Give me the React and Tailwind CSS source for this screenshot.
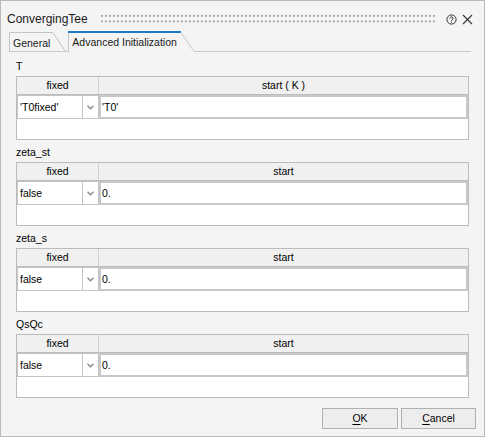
import React from "react";

const sections = [
  { label: "T", fixed: "'T0fixed'", startHeader: "start ( K )", start: "'T0'" },
  { label: "zeta_st", fixed: "false", startHeader: "start", start: "0." },
  { label: "zeta_s", fixed: "false", startHeader: "start", start: "0." },
  { label: "QsQc", fixed: "false", startHeader: "start", start: "0." },
];

function Section({ s, first }) {
  return (
    <div className={first ? "" : "mt-[4px]"}>
      <div className="h-[16px] leading-[16px] text-[10.5px] pl-[0px]">{s.label}</div>
      <div className="mt-[2px] h-[64px] border border-[#bcbcbc] bg-white flex flex-col">
        <div className="h-[18px] flex bg-[#f0f0f0] border-b border-[#bcbcbc] text-[10.5px] leading-[17px]">
          <div className="w-[82px] border-r border-[#d2d2d2] text-center">fixed</div>
          <div className="flex-1 text-center">{s.startHeader}</div>
        </div>
        <div className="h-[24px] flex text-[10.5px]">
          <div className="w-[82px] flex border border-[#c4c4c4]">
            <div className="flex-1 border-r border-[#c4c4c4] pl-[2px] leading-[22px]">{s.fixed}</div>
            <div className="w-[15px] flex items-center justify-center">
              <svg width="7" height="5" viewBox="0 0 7 5">
                <path d="M0.5 0.8 L3.5 3.8 L6.5 0.8" fill="none" stroke="#8a8a8a" strokeWidth="1.4" />
              </svg>
            </div>
          </div>
          <div className="flex-1 border-2 border-[#c8c8c8] pl-[1px] leading-[20px]">{s.start}</div>
        </div>
        <div className="flex-1 bg-white" />
      </div>
    </div>
  );
}

export default function App() {
  return (
    <div className="w-[485px] h-[437px] bg-[#f4f4f4] border border-[#bababa] flex flex-col text-black font-['Liberation_Sans',Arial,sans-serif]">
      {/* title bar */}
      <div className="h-[30px] pt-[6px] pl-[6px] flex items-center shrink-0">
        <span className="text-[12px] leading-none text-[#1a1a1a]">ConvergingTee</span>
        <svg className="ml-[13px]" width="334" height="8" viewBox="0 0 334 8">
          <defs>
            <pattern id="dots" x="0" y="0" width="4" height="5.5" patternUnits="userSpaceOnUse">
              <rect x="0" y="0" width="1.7" height="1.7" fill="#959595" />
            </pattern>
          </defs>
          <rect x="0" y="0" width="334" height="8" fill="url(#dots)" />
        </svg>
        <svg className="ml-[11px]" width="11" height="11" viewBox="0 0 11 11">
          <circle cx="5.5" cy="5.5" r="4.6" fill="none" stroke="#333" strokeWidth="1" />
          <path d="M4 4.4 A1.5 1.5 0 1 1 6.1 5.8 C5.6 6.1 5.5 6.4 5.5 6.9" fill="none" stroke="#333" strokeWidth="1" />
          <circle cx="5.5" cy="8.1" r="0.6" fill="#333" />
        </svg>
        <svg className="ml-[5px]" width="11" height="11" viewBox="0 0 11 11">
          <path d="M1 1 L10 10 M10 1 L1 10" stroke="#333" strokeWidth="1.1" />
        </svg>
      </div>

      {/* tab strip */}
      <div className="relative h-[21px] shrink-0 text-[10.5px]">
        <svg className="absolute inset-0" width="483" height="21" viewBox="0 0 483 21">
          <path d="M8.5 20.5 V1.5 H52 L64.5 20.5" fill="none" stroke="#c4c4c4" strokeWidth="1" />
          <path d="M8 20.5 H67" stroke="#c8c8c8" strokeWidth="1" />
          <path d="M67.5 21 V1" stroke="#c4c4c4" strokeWidth="1" />
          <path d="M67 1 H180" stroke="#1979ca" strokeWidth="2" />
          <path d="M180 1.5 L193 20.5 H470" fill="none" stroke="#c8c8c8" strokeWidth="1" />
        </svg>
        <div className="relative flex h-full">
          <span className="ml-[12px] pt-[5px] leading-[14px] text-[#1a1a1a]">General</span>
          <span className="ml-[22px] pt-[4px] leading-[14px] text-[#1a1a1a]">Advanced Initialization</span>
        </div>
      </div>

      {/* content */}
      <div className="px-[15px] pt-[6px]">
        {sections.map((s, i) => (
          <Section key={s.label} s={s} first={i === 0} />
        ))}
      </div>

      {/* buttons */}
      <div className="mt-auto flex justify-end gap-[3px] pr-[8px] pb-[7px] text-[10.5px]">
        <button className="w-[76px] h-[21px] bg-[#ededed] border border-[#b0b0b0] leading-[19px] text-center">
          <span className="underline underline-offset-2">O</span>K
        </button>
        <button className="w-[75px] h-[21px] bg-[#ededed] border border-[#b0b0b0] leading-[19px] text-center">
          <span className="underline underline-offset-2">C</span>ancel
        </button>
      </div>
    </div>
  );
}
